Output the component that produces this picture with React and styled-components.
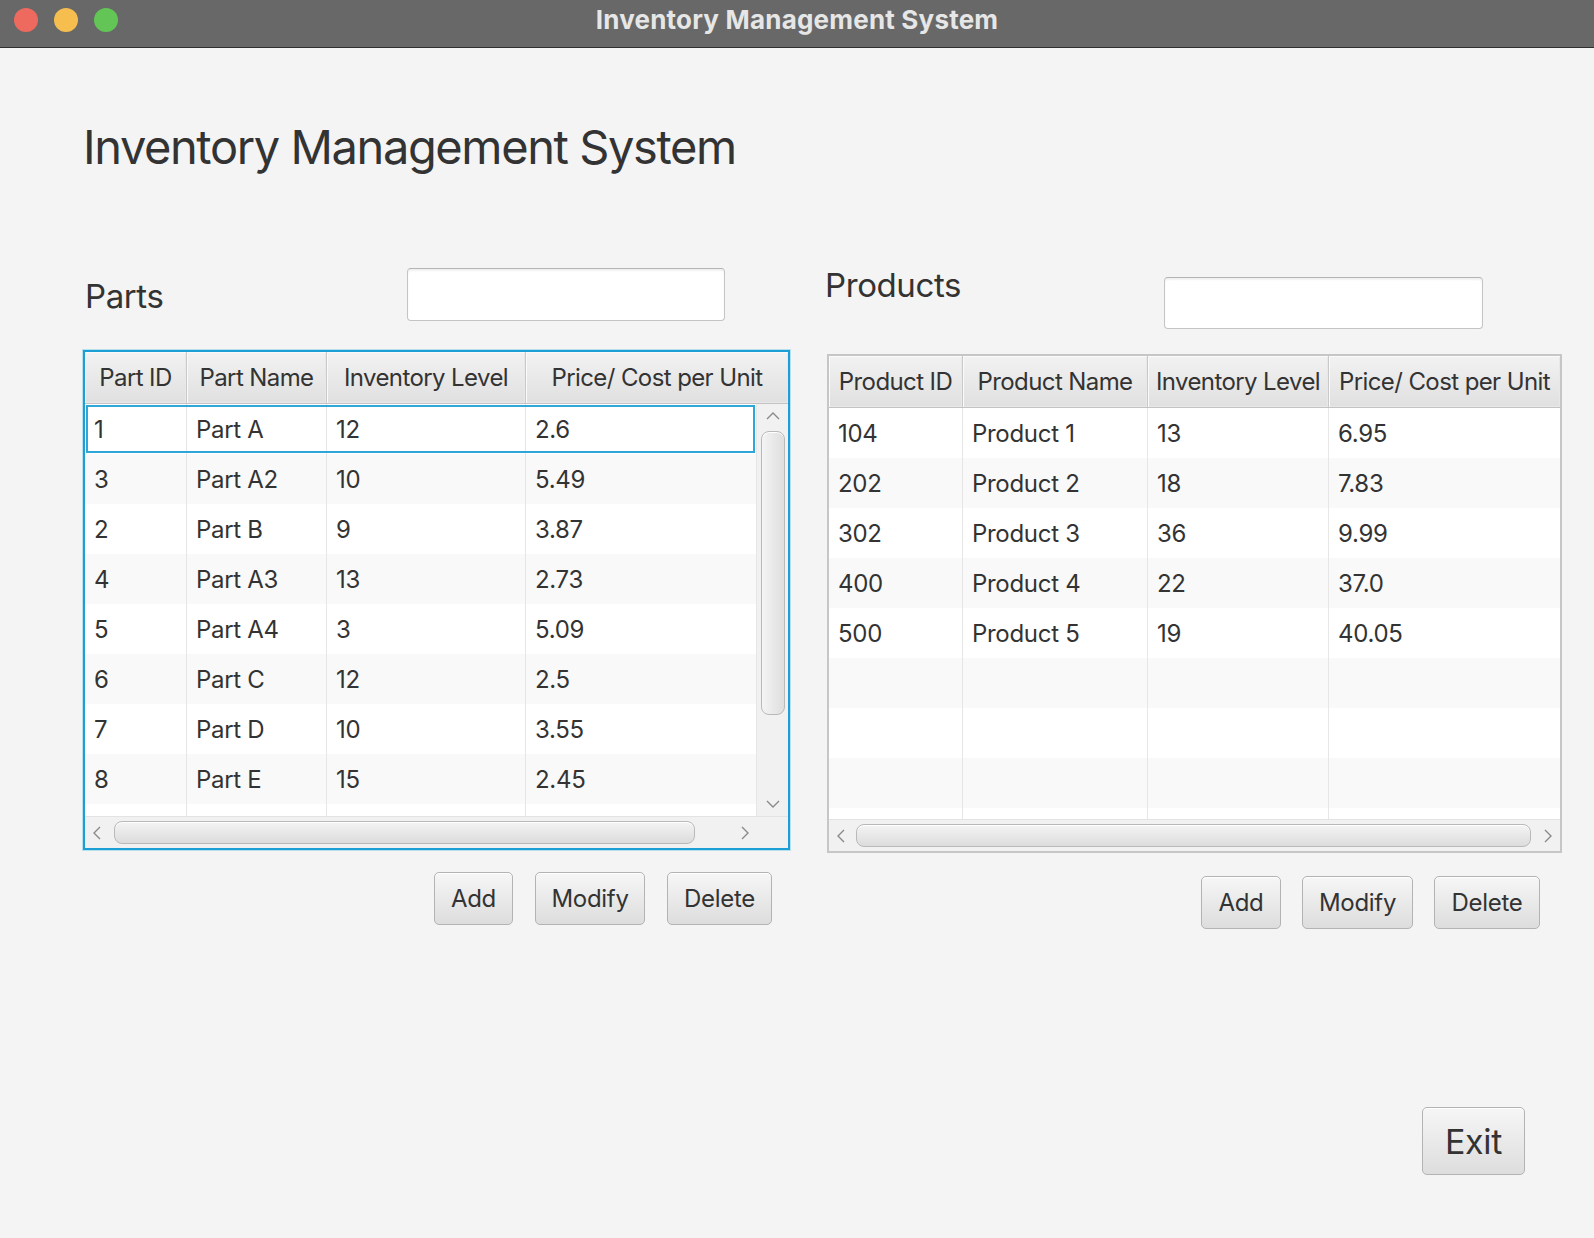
import React from 'react';
import styled, { createGlobalStyle } from 'styled-components';

const GlobalStyle = createGlobalStyle`
  html, body {
    margin: 0;
    padding: 0;
    background: #f4f4f4;
  }
  body {
    font-family: Inter, "Liberation Sans", sans-serif;
    color: #333333;
  }
`;

const Window = styled.div`
  width: 1594px;
  height: 1238px;
  display: flex;
  flex-direction: column;
  background: #f4f4f4;
  overflow: hidden;
`;

const TitleBar = styled.div`
  height: 47px;
  flex-shrink: 0;
  display: grid;
  grid-template-columns: 1fr auto 1fr;
  align-items: center;
  background: #676867;
  border-bottom: 1px solid #2f2f2f;
`;

const Lights = styled.div`
  display: flex;
  gap: 16px;
  padding-left: 14px;
  margin-top: -8px;
`;

const Light = styled.span`
  width: 24px;
  height: 24px;
  border-radius: 50%;
  background: ${p => p.$color};
`;

const WindowTitle = styled.div`
  font-size: 26px;
  font-weight: 700;
  letter-spacing: 0.2px;
  color: #e6e6e6;
  margin-top: -9px;
`;

const Content = styled.div`
  flex: 1;
  display: flex;
  flex-direction: column;
  padding: 69px 32px 0 83px;
`;

const Heading = styled.h1`
  margin: 0;
  height: 60px;
  line-height: 60px;
  font-size: 47px;
  font-weight: 400;
  letter-spacing: -1.4px;
  color: #333333;
`;

const Panels = styled.div`
  display: flex;
  gap: 37px;
  margin-top: 83px;
`;

const Panel = styled.section`
  width: ${p => p.$width}px;
  display: flex;
  flex-direction: column;
`;

const PanelHeader = styled.div`
  height: ${p => p.$height}px;
  display: flex;
  align-items: flex-start;
`;

const PanelLabel = styled.h2`
  margin: ${p => p.$top}px 0 0 ${p => p.$indent}px;
  width: ${p => p.$width}px;
  height: 40px;
  line-height: 40px;
  font-size: 33px;
  font-weight: 400;
  letter-spacing: -0.4px;
  color: #333333;
`;

const SearchField = styled.input`
  box-sizing: border-box;
  margin-top: ${p => p.$top}px;
  width: ${p => p.$width}px;
  height: ${p => p.$height}px;
  border: 1px solid #c4c4c4;
  border-top-color: #b4b4b4;
  border-radius: 4px;
  background: #ffffff;
  box-shadow: inset 0 2px 2px rgba(0, 0, 0, 0.06);
  outline: none;
`;

const TableFrame = styled.div`
  box-sizing: border-box;
  height: ${p => p.$height}px;
  display: flex;
  flex-direction: column;
  background: #ffffff;
  border: 2px solid ${p => (p.$focused ? '#1c9fd4' : '#c6c6c6')};
  box-shadow: ${p => (p.$focused ? '0 0 0 1px rgba(3, 158, 211, 0.25)' : 'none')};
  overflow: hidden;
`;

const HeaderRow = styled.div`
  height: ${p => p.$height}px;
  flex-shrink: 0;
  display: flex;
  border-bottom: 1px solid #c3c3c3;
  box-sizing: border-box;
`;

const HeaderCell = styled.div`
  box-sizing: border-box;
  width: ${p => (p.$w ? `${p.$w}px` : 'auto')};
  flex: ${p => (p.$w ? '0 0 auto' : '1')};
  display: flex;
  align-items: center;
  justify-content: center;
  white-space: nowrap;
  font-size: 24px;
  letter-spacing: -0.6px;
  color: #333333;
  background: linear-gradient(#f2f2f2, #e0e0e0);
  border-right: 1px solid #c9c9c9;
  box-shadow: inset 1px 1px 0 #fafafa, inset -1px -1px 0 #e8e8e8;
  &:last-child {
    border-right: none;
  }
`;

const BodyArea = styled.div`
  flex: 1;
  display: flex;
  min-height: 0;
`;

const Rows = styled.div`
  flex: 1;
  display: flex;
  flex-direction: column;
  overflow: hidden;
`;

const Row = styled.div`
  height: ${p => p.$height}px;
  flex-shrink: 0;
  display: flex;
  background: ${p => (p.$alt ? '#f9f9f9' : '#ffffff')};
  outline: ${p => (p.$focused ? '2px solid #2ea6d8' : 'none')};
  outline-offset: -3px;
`;

const Cell = styled.div`
  box-sizing: border-box;
  width: ${p => (p.$w ? `${p.$w}px` : 'auto')};
  flex: ${p => (p.$w ? '0 0 auto' : '1')};
  display: flex;
  align-items: center;
  padding-left: 9px;
  white-space: nowrap;
  font-size: 24px;
  letter-spacing: -0.3px;
  color: #333333;
  border-right: 1px solid #e6e6e6;
  &:last-child {
    border-right: none;
  }
`;

const VScroll = styled.div`
  width: 31px;
  flex-shrink: 0;
  display: flex;
  flex-direction: column;
  align-items: center;
  background: #f1f1f1;
  border-left: 1px solid #e6e6e6;
`;

const HScrollRow = styled.div`
  height: ${p => p.$height}px;
  flex-shrink: 0;
  display: flex;
  border-top: 1px solid #e3e3e3;
  box-sizing: border-box;
  background: #f1f1f1;
`;

const HScroll = styled.div`
  flex: 1;
  display: flex;
  align-items: center;
`;

const Corner = styled.div`
  width: 31px;
  flex-shrink: 0;
  background: #f1f1f1;
`;

const ArrowBox = styled.div`
  width: 24px;
  height: 24px;
  flex-shrink: 0;
  display: flex;
  align-items: center;
  justify-content: center;
`;

const Spacer = styled.div`
  flex: 1;
`;

const Thumb = styled.div`
  box-sizing: border-box;
  flex-shrink: 0;
  border: 1.5px solid #b9b9b9;
  border-radius: 8px;
  background: ${p => (p.$vertical
    ? 'linear-gradient(90deg, #f4f4f4, #dedede)'
    : 'linear-gradient(#f4f4f4, #dcdcdc)')};
  box-shadow: inset 0 1px 0 #ffffff;
`;

const ButtonRow = styled.div`
  display: flex;
  justify-content: flex-end;
  gap: ${p => p.$gap}px;
  margin-top: ${p => p.$top}px;
  padding-right: ${p => p.$right}px;
`;

const Button = styled.button`
  box-sizing: border-box;
  width: ${p => p.$w}px;
  height: ${p => p.$h || 53}px;
  padding: 0;
  border: 1.5px solid #b3b3b3;
  border-radius: 5px;
  background: linear-gradient(#f6f6f6, #dddddd);
  box-shadow: inset 0 1px 0 #ffffff;
  font-family: Inter, "Liberation Sans", sans-serif;
  font-size: ${p => p.$size || 24}px;
  letter-spacing: -0.3px;
  color: #333333;
  cursor: pointer;
`;

const Footer = styled.div`
  display: flex;
  justify-content: flex-end;
  margin-top: 178px;
  padding-right: 37px;
`;

const Chevron = ({ dir }) => {
  const pts = {
    up: '2,9 8,3 14,9',
    down: '2,3 8,9 14,3',
    left: '9,2 3,8 9,14',
    right: '3,2 9,8 3,14',
  }[dir];
  const vertical = dir === 'up' || dir === 'down';
  return (
    <svg width={vertical ? 16 : 12} height={vertical ? 12 : 16} viewBox={vertical ? '0 0 16 12' : '0 0 12 16'}>
      <polyline points={pts} fill="none" stroke="#8a8a8a" strokeWidth="1.4" />
    </svg>
  );
};

const parts = [
  ['1', 'Part A', '12', '2.6'],
  ['3', 'Part A2', '10', '5.49'],
  ['2', 'Part B', '9', '3.87'],
  ['4', 'Part A3', '13', '2.73'],
  ['5', 'Part A4', '3', '5.09'],
  ['6', 'Part C', '12', '2.5'],
  ['7', 'Part D', '10', '3.55'],
  ['8', 'Part E', '15', '2.45'],
  ['', '', '', ''],
];

const products = [
  ['104', 'Product 1', '13', '6.95'],
  ['202', 'Product 2', '18', '7.83'],
  ['302', 'Product 3', '36', '9.99'],
  ['400', 'Product 4', '22', '37.0'],
  ['500', 'Product 5', '19', '40.05'],
  ['', '', '', ''],
  ['', '', '', ''],
  ['', '', '', ''],
  ['', '', '', ''],
];

const DataTable = ({ columns, rows, focused, height, headerHeight, vscroll, thumbLeft, thumbWidth }) => (
  <TableFrame $focused={focused} $height={height}>
    <HeaderRow $height={headerHeight}>
      {columns.map((c, i) => (
        <HeaderCell key={c.title} $w={i < columns.length - 1 ? c.w : undefined}>
          {c.title}
        </HeaderCell>
      ))}
    </HeaderRow>
    <BodyArea>
      <Rows>
        {rows.map((r, ri) => (
          <Row key={ri} $height={50} $alt={ri % 2 === 1} $focused={focused && ri === 0}>
            {r.map((v, ci) => (
              <Cell key={ci} $w={columns[ci].w}>{v}</Cell>
            ))}
          </Row>
        ))}
      </Rows>
      {vscroll && (
        <VScroll>
          <ArrowBox><Chevron dir="up" /></ArrowBox>
          <Thumb $vertical style={{ width: 24, height: 284, marginTop: 3 }} />
          <Spacer />
          <ArrowBox><Chevron dir="down" /></ArrowBox>
        </VScroll>
      )}
    </BodyArea>
    <HScrollRow $height={32}>
      <HScroll>
        <ArrowBox><Chevron dir="left" /></ArrowBox>
        <Thumb style={{ height: 23, width: thumbWidth, marginLeft: thumbLeft }} />
        <Spacer />
        <ArrowBox><Chevron dir="right" /></ArrowBox>
      </HScroll>
      {vscroll && <Corner />}
    </HScrollRow>
  </TableFrame>
);

const partColumns = [
  { title: 'Part ID', w: 102 },
  { title: 'Part Name', w: 140 },
  { title: 'Inventory Level', w: 199 },
  { title: 'Price/ Cost per Unit', w: 231 },
];

const productColumns = [
  { title: 'Product ID', w: 134 },
  { title: 'Product Name', w: 185 },
  { title: 'Inventory Level', w: 181 },
  { title: 'Price/ Cost per Unit', w: 231 },
];

const App = () => (
  <Window>
    <GlobalStyle />
    <TitleBar>
      <Lights>
        <Light $color="#ee6a5f" />
        <Light $color="#f5be4f" />
        <Light $color="#62c555" />
      </Lights>
      <WindowTitle>Inventory Management System</WindowTitle>
      <div />
    </TitleBar>
    <Content>
      <Heading>Inventory Management System</Heading>
      <Panels>
        <Panel $width={707}>
          <PanelHeader $height={90}>
            <PanelLabel $top={16} $indent={2} $width={322}>Parts</PanelLabel>
            <SearchField $top={8} $width={318} $height={53} />
          </PanelHeader>
          <DataTable
            columns={partColumns}
            rows={parts}
            focused
            height={500}
            headerHeight={52}
            vscroll
            thumbLeft={5}
            thumbWidth={581}
          />
          <ButtonRow $top={22} $gap={22} $right={18}>
            <Button $w={79}>Add</Button>
            <Button $w={110}>Modify</Button>
            <Button $w={105}>Delete</Button>
          </ButtonRow>
        </Panel>
        <Panel $width={735}>
          <PanelHeader $height={94}>
            <PanelLabel $top={5} $indent={-2} $width={339}>Products</PanelLabel>
            <SearchField $top={17} $width={319} $height={52} />
          </PanelHeader>
          <DataTable
            columns={productColumns}
            rows={products}
            height={499}
            headerHeight={52}
            thumbLeft={3}
            thumbWidth={675}
          />
          <ButtonRow $top={23} $gap={21} $right={22}>
            <Button $w={80}>Add</Button>
            <Button $w={111}>Modify</Button>
            <Button $w={106}>Delete</Button>
          </ButtonRow>
        </Panel>
      </Panels>
      <Footer>
        <Button $w={103} $h={68} $size={34}>Exit</Button>
      </Footer>
    </Content>
  </Window>
);

export default App;
